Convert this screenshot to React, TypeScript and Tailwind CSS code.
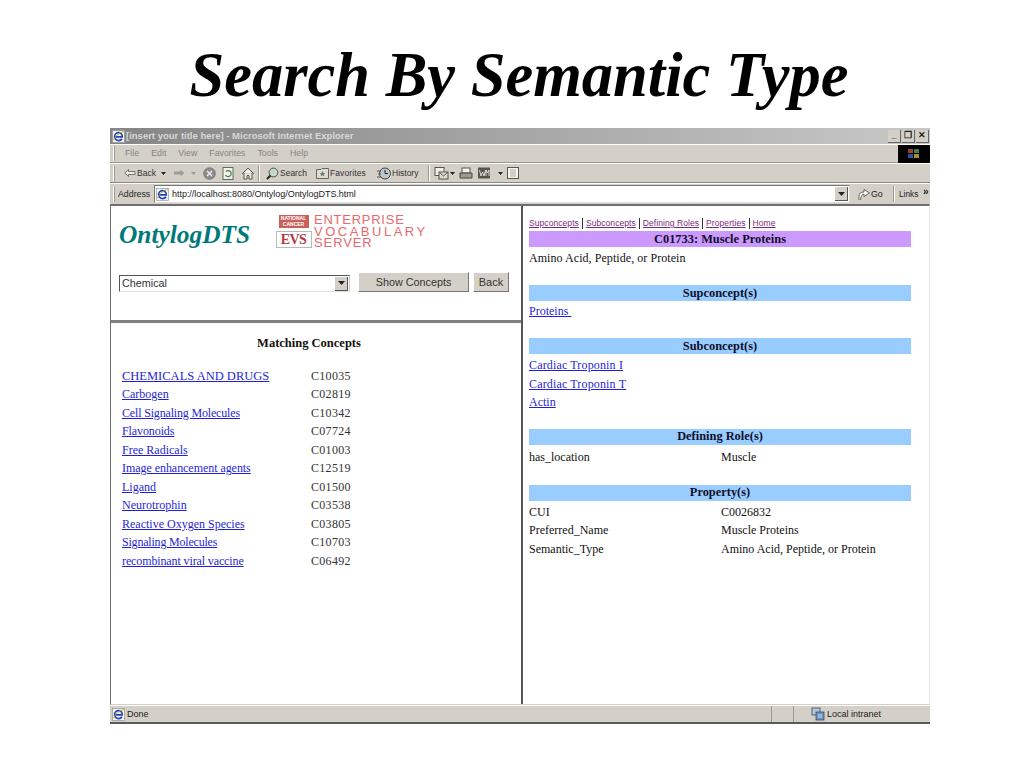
import React from "react";

const IE = () => (
  <svg width="13" height="13" viewBox="0 0 13 13" className="shrink-0">
    <rect x="0.5" y="0.5" width="12" height="12" fill="#f4f4f4" stroke="#8a8a8a" strokeWidth="0.6" />
    <path d="M3 6.8H10.2C10.4 4.2 8.6 2.6 6.6 2.6C4.4 2.6 2.6 4.4 2.6 6.6C2.6 8.9 4.4 10.6 6.6 10.6C8 10.6 9.2 10 9.9 8.8" fill="none" stroke="#1c46b8" strokeWidth="1.7" />
    <path d="M1 10.5Q6 2 12 1.5" fill="none" stroke="#d8a020" strokeWidth="0.9" />
  </svg>
);

const Grip = () => <div className="w-[2px] h-[15px] bg-[#9a9a9a] border-l border-white shrink-0" />;
const Sep = () => <div className="w-[2px] h-[16px] bg-[#9a9790] border-r border-white shrink-0" />;

const Caret = () => (
  <svg width="7" height="4" viewBox="0 0 7 4" className="shrink-0"><path d="M0 0H7L3.5 4Z" fill="#222" /></svg>
);
const SmallCaret = ({ fill }: { fill: string }) => (
  <svg width="5" height="3" viewBox="0 0 5 3" className="shrink-0"><path d="M0 0H5L2.5 3Z" fill={fill} /></svg>
);

const Page = () => (
  <svg width="12" height="12" viewBox="0 0 12 12" className="shrink-0">
    <rect x="0.5" y="0.5" width="11" height="11" fill="#f4f4ee" stroke="#555" />
    <path d="M3 3H9M3 5H9M3 7H9M3 9H9" stroke="#888" strokeWidth="0.7" />
  </svg>
);

const Bar = ({ children, purple }: { children: React.ReactNode; purple?: boolean }) => (
  <div className={`h-[16px] w-[382px] flex items-center justify-center font-bold text-[12.4px] leading-none text-[#10102a] ${purple ? "bg-[#cc99ff]" : "bg-[#99ccff]"}`}>
    {children}
  </div>
);

const Lnk = ({ children, className }: { children: React.ReactNode; className?: string }) => (
  <a className={`text-[#1f1fd8] underline underline-offset-1 decoration-[#1f1fd8] ${className ?? ""}`}>{children}</a>
);

const concepts: [string, string, string][] = [
  ["CHEMICALS AND DRUGS", "C10035", "text-[12.5px]"],
  ["Carbogen", "C02819", ""],
  ["Cell Signaling Molecules", "C10342", "tracking-[-0.17px]"],
  ["Flavonoids", "C07724", "tracking-[-0.1px]"],
  ["Free Radicals", "C01003", ""],
  ["Image enhancement agents", "C12519", "tracking-[-0.05px]"],
  ["Ligand", "C01500", ""],
  ["Neurotrophin", "C03538", ""],
  ["Reactive Oxygen Species", "C03805", ""],
  ["Signaling Molecules", "C10703", "tracking-[-0.2px]"],
  ["recombinant viral vaccine", "C06492", "tracking-[-0.12px]"],
];

const TopLinks = ["Supconcepts", "Subconcepts", "Defining Roles", "Properties", "Home"];

export default function App() {
  return (
    <div className="w-[1024px] h-[768px] bg-white overflow-hidden font-['Liberation_Sans',sans-serif]">
      <div className="h-[128px] flex items-center justify-center pt-[23px] pl-[14px]">
        <h1 className="font-['Liberation_Serif',serif] font-bold italic text-[62.5px] leading-none text-black">
          Search By Semantic Type
        </h1>
      </div>

      <div className="ml-[110px] w-[820px] h-[596px] flex flex-col bg-[#d4d0c8] border-b-2 border-[#5a5a5a]">
        {/* title bar */}
        <div className="h-[16px] flex items-center pl-[2px] pr-[1px] bg-gradient-to-r from-[#868686] to-[#c8c8c8] shrink-0">
          <IE />
          <span className="ml-[1px] text-[9.5px] font-bold text-[#d8d8d8] leading-none">[insert your title here] - Microsoft Internet Explorer</span>
          <div className="ml-auto flex gap-[1px]">
            {["_", "❐", "✕"].map((c, i) => (
              <div key={i} className="w-[13px] h-[13px] bg-[#d4d0c8] border-r border-b border-[#666] flex items-center justify-center text-[9px] font-bold leading-none text-[#222]">{c}</div>
            ))}
          </div>
        </div>
        {/* menu */}
        <div className="h-[19px] flex items-center pl-[3px] border-t border-white border-b border-b-[#9a9790] shrink-0">
          <Grip />
          <div className="ml-[10px] flex gap-[12px] text-[8.8px] text-[#858585] leading-none">
            <span>File</span><span>Edit</span><span>View</span><span>Favorites</span><span>Tools</span><span>Help</span>
          </div>
          <div className="ml-auto w-[32px] h-[18px] bg-black flex items-center justify-center">
            <svg width="12" height="10" viewBox="0 0 12 10">
              <rect x="0" y="0" width="5" height="4" fill="#a04030" /><rect x="6" y="0" width="5" height="4" fill="#40804a" />
              <rect x="0" y="5" width="5" height="4" fill="#3050a0" /><rect x="6" y="5" width="5" height="4" fill="#a89030" />
            </svg>
          </div>
        </div>
        {/* toolbar */}
        <div className="h-[20px] flex items-center pl-[3px] border-t border-white border-b border-b-[#8a8780] shrink-0 text-[8.5px] text-[#333] leading-none">
          <Grip />
          <svg width="12" height="8" viewBox="0 0 12 8" className="ml-[9px] shrink-0"><path d="M4.5 0.5L0.8 4L4.5 7.5V5.5H11V2.5H4.5Z" fill="#e8f0d8" stroke="#445" strokeWidth="0.7" /></svg>
          <span className="ml-[1px] w-[18px]">Back</span>
          <span className="ml-[6px]"><SmallCaret fill="#222" /></span>
          <svg width="12" height="8" viewBox="0 0 12 8" className="ml-[7px] shrink-0"><path d="M7.5 0.5L11.2 4L7.5 7.5V5.5H1V2.5H7.5Z" fill="#9a9a9a" /></svg>
          <span className="ml-[6px]"><SmallCaret fill="#999" /></span>
          <svg width="13" height="13" viewBox="0 0 13 13" className="ml-[7px] shrink-0"><circle cx="6.5" cy="6.5" r="5.8" fill="#8d8d8d" stroke="#555" strokeWidth="0.6" /><path d="M4 4L9 9M9 4L4 9" stroke="#eee" strokeWidth="1.4" /></svg>
          <svg width="12" height="13" viewBox="0 0 12 13" className="ml-[6px] shrink-0"><rect x="1" y="0.5" width="10" height="12" fill="#f2f2ea" stroke="#666" /><path d="M4 4.5A3 3 0 1 1 3.5 8" fill="none" stroke="#3f7f4c" strokeWidth="1.2" /></svg>
          <svg width="14" height="13" viewBox="0 0 14 13" className="ml-[7px] shrink-0"><path d="M1 7L7 1L13 7M3 6V12H6V8.5H8V12H11V6" fill="#f0f0e8" stroke="#444" strokeWidth="0.9" /></svg>
          <div className="ml-[3px]"><Sep /></div>
          <svg width="13" height="13" viewBox="0 0 13 13" className="ml-[6px] shrink-0"><circle cx="7.5" cy="5.5" r="4.4" fill="#c7d6c8" stroke="#456" /><path d="M4.5 8.5L1 12" stroke="#222" strokeWidth="2" /></svg>
          <span className="ml-[1px] w-[27px]">Search</span>
          <svg width="13" height="12" viewBox="0 0 13 12" className="ml-[9px] shrink-0"><path d="M0.5 2.5H5L6 1.5H12.5V11.5H0.5Z" fill="#dcdcd2" stroke="#666" /><path d="M6.5 4L7.4 6H9.3L7.9 7.3L8.4 9.3L6.5 8.2L4.6 9.3L5.1 7.3L3.7 6H5.6Z" fill="#777" /></svg>
          <span className="ml-[1px] w-[37px] tracking-[0.1px]">Favorites</span>
          <svg width="15" height="13" viewBox="0 0 15 13" className="ml-[10px] shrink-0"><circle cx="8" cy="6.5" r="5.5" fill="#b9c6cc" stroke="#444" /><path d="M8 3V6.5H11" fill="none" stroke="#222" /><path d="M0 4H4M1 7H4M0 10H4" stroke="#555" /></svg>
          <span className="w-[27px]">History</span>
          <div className="ml-[9px]"><Sep /></div>
          <svg width="15" height="13" viewBox="0 0 15 13" className="ml-[4px] shrink-0"><rect x="1" y="0.5" width="9" height="8" fill="#f0f0e8" stroke="#555" /><rect x="5" y="5" width="9" height="7" fill="#dcdcd2" stroke="#555" /><path d="M5 5L9.5 9L14 5" fill="none" stroke="#555" /></svg>
          <span className="ml-[1px]"><SmallCaret fill="#222" /></span>
          <svg width="14" height="13" viewBox="0 0 14 13" className="ml-[4px] shrink-0"><rect x="3" y="1" width="8" height="5" fill="#f4f4ee" stroke="#555" /><path d="M1 6H13L13 11H1Z" fill="#9c9c94" stroke="#444" /></svg>
          <svg width="14" height="12" viewBox="0 0 13 12" className="ml-[4px] shrink-0"><rect x="0.5" y="0.5" width="12" height="11" fill="#55554f" /><path d="M2 3L3.5 9L5 5L6.5 9L8 3M8.5 9V3L10 6L11.5 3V9" fill="none" stroke="#f2f2f2" strokeWidth="0.8" /></svg>
          <span className="ml-[7px]"><SmallCaret fill="#222" /></span>
          <span className="ml-[4px]"><Page /></span>
        </div>
        {/* address */}
        <div className="h-[21px] flex items-center pl-[3px] border-t border-white shrink-0 text-[8.8px] text-[#222] leading-none">
          <Grip />
          <span className="ml-[3px] w-[36px] shrink-0">Address</span>
          <div className="h-[18px] w-[696px] shrink-0 bg-white border border-[#777] border-r-[#ddd] border-b-[#ddd] flex items-center pl-[1px]">
            <IE />
            <span className="ml-[3px] text-[9px] text-[#222] tracking-[-0.03px]">http://localhost:8080/Ontylog/OntylogDTS.html</span>
            <div className="ml-auto mr-[1px] w-[13px] h-[14px] bg-[#d4d0c8] border-r border-b border-[#555] flex items-center justify-center"><Caret /></div>
          </div>
          <svg width="14" height="13" viewBox="0 0 14 13" className="ml-[7px] shrink-0"><path d="M2 12V8Q2 4 7 4V1.5L12.5 5L7 8.5V6Q4 6 3.5 12" fill="#fff" stroke="#444" strokeWidth="0.8" /></svg>
          <span className="ml-[0px] w-[11px]">Go</span>
          <div className="ml-[11px]"><Sep /></div>
          <span className="ml-[4px] w-[19px] text-[8.3px]">Links</span>
          <span className="ml-[5px] font-bold text-[10px] -mt-[5px]">»</span>
        </div>
        {/* content */}
        <div className="h-[501px] flex bg-white border border-l-[#6f6f6f] border-t-[#6f6f6f] border-t-2 border-r-[#e8e8e8] border-b-[#d4d0c8] font-['Liberation_Serif',serif] text-[12px] leading-none text-[#111] shrink-0">
          {/* left */}
          <div className="w-[410px] flex flex-col shrink-0">
            <div className="h-[117px] border-b-[3px] border-[#808080] shrink-0 pl-[8px]">
              <div className="h-[66px] flex items-start">
                <div className="mt-[13px] w-[156px] font-bold italic text-[25.4px] leading-[30px] text-[#007a78] shrink-0">OntylogDTS</div>
                <div className="mt-[8px] flex">
                  <div className="flex flex-col items-center w-[37px] shrink-0">
                    <div className="mt-[1px] w-[30px] h-[13px] bg-[#c9605a] text-white text-[5px] leading-[6px] font-['Liberation_Sans',sans-serif] font-bold text-center overflow-hidden">NATIONAL CANCER</div>
                    <div className="mt-[3px] w-[36px] h-[17px] border border-[#bbb] flex items-center justify-center font-bold text-[14px] text-[#b03a40] tracking-[-0.5px]">EVS</div>
                  </div>
                  <div className="ml-[2px] text-[13px] leading-[11.5px] text-[#e8686c] font-['Liberation_Sans',sans-serif] font-light">
                    <div className="tracking-[0.75px]">ENTERPRISE</div>
                    <div className="tracking-[2.5px]">VOCABULARY</div>
                    <div className="tracking-[0.9px]">SERVER</div>
                  </div>
                </div>
              </div>
              <div className="flex items-start font-['Liberation_Sans',sans-serif] text-[10.8px] text-[#333]">
                <div className="mt-[3px] w-[231px] h-[17px] flex items-center pl-[2px] border border-[#555] border-r-[#ccc] border-b-[#ddd]">
                  Chemical
                  <div className="ml-auto mr-[1px] w-[13px] h-[14px] bg-[#d4d0c8] border-r border-b border-[#555] flex items-center justify-center"><Caret /></div>
                </div>
                <div className="ml-[8px] w-[111px] h-[20px] bg-[#d4d0c8] border-r border-b border-[#777] border-t-white border-t border-l border-l-white flex items-center justify-center">Show Concepts</div>
                <div className="ml-[4px] w-[36px] h-[20px] bg-[#d4d0c8] border-r border-b border-[#777] border-t-white border-t border-l border-l-white flex items-center justify-center text-[11px]">Back</div>
              </div>
            </div>
            <div className="pt-[14px] text-center font-bold w-[396px] text-[12.5px]">Matching Concepts</div>
            <div className="mt-[17px] pl-[11px] flex flex-col">
              {concepts.map(([n, c, cls]) => (
                <div key={c} className="h-[18.5px] flex items-center">
                  <div className="w-[189px]"><Lnk className={cls}>{n}</Lnk></div>
                  <div className="text-[#333] tracking-[0.3px]">{c}</div>
                </div>
              ))}
            </div>
          </div>
          {/* divider */}
          <div className="w-[2px] bg-[#555] shrink-0" />
          {/* right */}
          <div className="flex-1 pl-[6px] flex flex-col">
            <div className="h-[25px] flex items-end pb-[2px] font-['Liberation_Sans',sans-serif] text-[8.5px] tracking-[0.07px] text-[#7a2a80]">
              {TopLinks.map((l, i) => (
                <React.Fragment key={l}>
                  {i > 0 && <span className="mx-[3px] w-[1px] h-[11px] bg-[#333]" />}
                  <span className="underline leading-[11px]">{l}</span>
                </React.Fragment>
              ))}
            </div>
            <Bar purple>C01733: Muscle Proteins</Bar>
            <div className="h-[22px] flex items-center tracking-[0.06px]">Amino Acid, Peptide, or Protein</div>
            <div className="mt-[16px]"><Bar>Supconcept(s)</Bar></div>
            <div className="h-[20px] flex items-center"><Lnk>Proteins&nbsp;</Lnk></div>
            <div className="mt-[17px]"><Bar>Subconcept(s)</Bar></div>
            <div className="mt-[2px] flex flex-col">
              <div className="h-[18.5px] flex items-center"><Lnk className="tracking-[0.15px]">Cardiac Troponin I</Lnk></div>
              <div className="h-[18.5px] flex items-center"><Lnk className="tracking-[0.15px]">Cardiac Troponin T</Lnk></div>
              <div className="h-[18.5px] flex items-center"><Lnk>Actin</Lnk></div>
            </div>
            <div className="mt-[17px]"><Bar>Defining Role(s)</Bar></div>
            <div className="h-[24px] flex items-center">
              <div className="w-[192px]">has_location</div><div>Muscle</div>
            </div>
            <div className="mt-[16px]"><Bar>Property(s)</Bar></div>
            <div className="mt-[2px] flex flex-col">
              {[["CUI", "C0026832"], ["Preferred_Name", "Muscle Proteins"], ["Semantic_Type", "Amino Acid, Peptide, or Protein"]].map(([a, b]) => (
                <div key={a} className="h-[18.5px] flex items-center">
                  <div className="w-[192px]">{a}</div><div>{b}</div>
                </div>
              ))}
            </div>
          </div>
        </div>
        {/* status */}
        <div className="h-[17px] flex items-center pl-[2px] text-[9px] text-[#222] leading-none border-t border-white shrink-0">
          <IE />
          <span className="ml-[2px]">Done</span>
          <div className="ml-auto flex h-full items-center">
            <div className="w-[22px] h-full border-l border-[#999]" />
            <div className="w-[137px] h-full border-l border-[#999] pl-[17px] flex items-center">
              <svg width="14" height="14" viewBox="0 0 14 14" className="shrink-0"><rect x="1" y="1" width="8" height="7" fill="#aecbd8" stroke="#335" strokeWidth="0.7" /><rect x="5" y="5" width="8" height="8" fill="#6f97c5" stroke="#335" strokeWidth="0.7" /><path d="M7 8H11M7 10H11" stroke="#eee" strokeWidth="0.7" /></svg>
              <span className="ml-[2px]">Local intranet</span>
            </div>
          </div>
        </div>
      </div>
    </div>
  );
}
